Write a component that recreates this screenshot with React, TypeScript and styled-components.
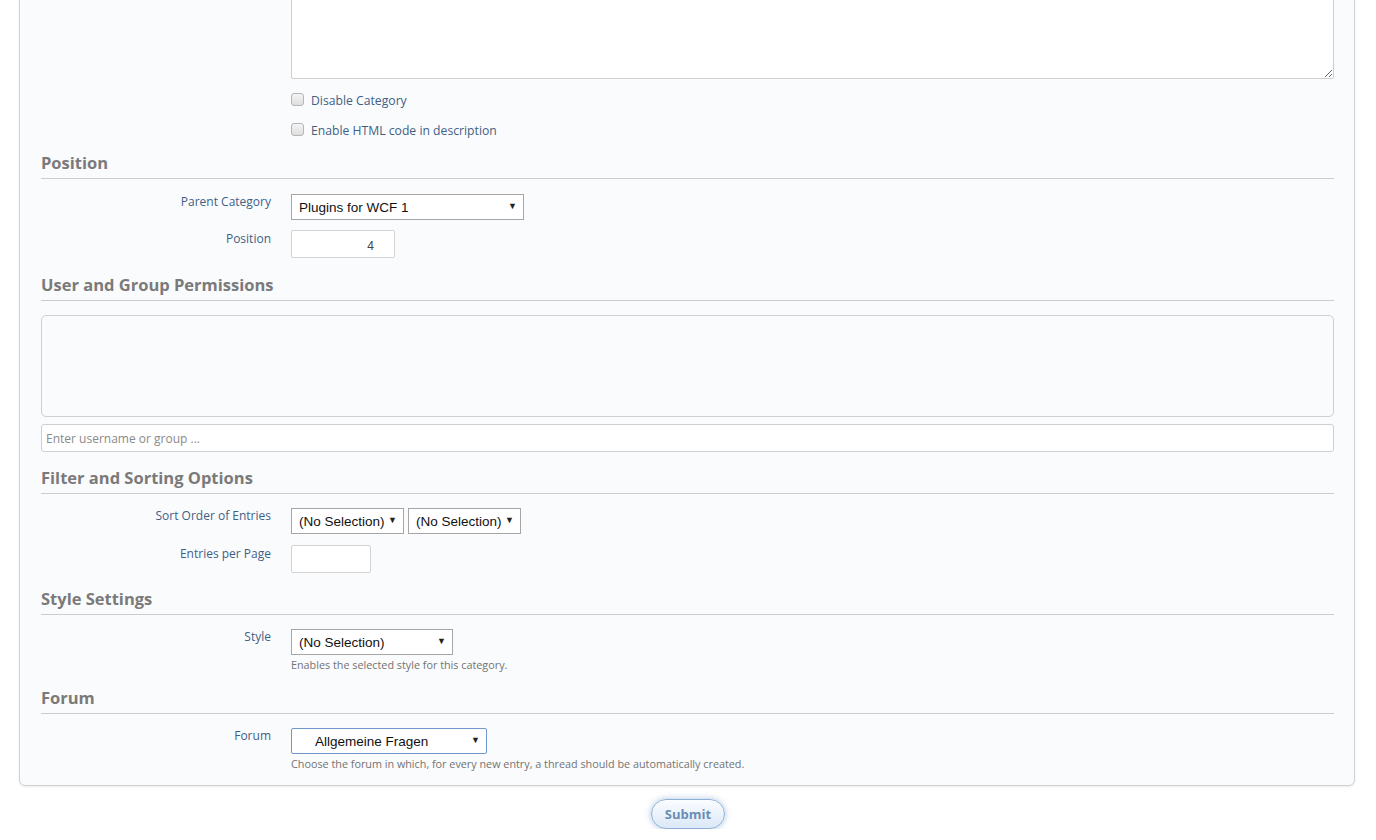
import styled, { createGlobalStyle } from 'styled-components';

const GlobalStyle = createGlobalStyle`
  html, body {
    margin: 0;
    padding: 0;
    background: #ffffff;
    overflow: hidden;
  }
  * {
    box-sizing: border-box;
  }
`;

const Page = styled.div`
  padding: 0 21px 0 19px;
  font-family: "Open Sans", "Noto Sans", sans-serif;
`;

const Container = styled.div`
  margin-top: -32px;
  background: #fafbfc;
  border: 1px solid #cfd2d5;
  border-radius: 0 0 6px 6px;
  box-shadow: 0 1px 2px rgba(0, 0, 0, 0.08);
  padding: 20px 20px 14px 21px;
`;

const FieldRow = styled.div<{ $gap?: number }>`
  display: grid;
  grid-template-columns: 230px 1fr;
  column-gap: 20px;
  margin-top: ${(p) => p.$gap ?? 0}px;
`;

const Label = styled.label<{ $offset?: number }>`
  text-align: right;
  font-size: 12px;
  line-height: 16px;
  color: #3f5f86;
  padding-top: ${(p) => p.$offset ?? 0}px;
`;

const FieldCol = styled.div`
  display: flex;
  flex-direction: column;
  align-items: flex-start;
`;

const TextArea = styled.textarea`
  width: 100%;
  height: 90px;
  display: block;
  border: 1px solid #cfcfcf;
  border-radius: 2px;
  background: #fff;
  resize: vertical;
`;

const CheckRow = styled.label<{ $gap: number }>`
  display: flex;
  align-items: center;
  gap: 7px;
  height: 20px;
  margin-top: ${(p) => p.$gap}px;
  font-size: 12.2px;
  color: #3f5f86;
`;

const Check = styled.input`
  appearance: none;
  margin: 0 0 2px 0;
  width: 13px;
  height: 13px;
  border: 1px solid #b5b5b5;
  border-radius: 3px;
  background: linear-gradient(#f4f4f4, #dedede);
`;

const SectionTitle = styled.h2<{ $gap: number }>`
  margin: ${(p) => p.$gap}px 0 0;
  font-size: 16.5px;
  line-height: 22px;
  font-weight: 700;
  color: #7a7a7a;
  padding-bottom: 4px;
  border-bottom: 1px solid #cccccc;
`;

const SelectBox = styled.div<{ $width: number; $focus?: boolean; $indent?: number }>`
  position: relative;
  width: ${(p) => p.$width}px;
  height: 26px;
  border: 1px solid ${(p) => (p.$focus ? '#6f97cc' : '#a6a6a6')};
  border-radius: ${(p) => (p.$focus ? '2px' : '0')};
  background: #fff;
  font-family: "Liberation Sans", Arial, sans-serif;
  font-size: 13.5px;
  color: #111;
  display: flex;
  align-items: center;
  padding-left: ${(p) => p.$indent ?? 7}px;

  &::after {
    content: '▼';
    position: absolute;
    right: 6px;
    top: 6px;
    font-size: 9px;
    color: #222;
  }
`;

const SelectPair = styled.div`
  display: flex;
  gap: 4px;
`;

const TextInput = styled.input<{ $width: number; $align?: string }>`
  width: ${(p) => p.$width}px;
  height: 28px;
  border: 1px solid #d3d3d3;
  border-radius: 2px;
  background: #fff;
  font-family: "Liberation Sans", Arial, sans-serif;
  font-size: 12px;
  color: #444;
  text-align: ${(p) => p.$align ?? 'left'};
  padding: 4px 20px 0 6px;
`;

const PermBox = styled.div`
  margin-top: 14px;
  height: 102px;
  border: 1px solid #cfcfcf;
  border-radius: 5px;
  background: #fafbfc;
`;

const SearchInput = styled.input`
  display: block;
  margin-top: 7px;
  width: 100%;
  height: 28px;
  border: 1px solid #cfcfcf;
  border-radius: 3px;
  background: #fff;
  padding: 0 4px;
  font-family: "Open Sans", sans-serif;
  font-size: 12px;
  color: #333;

  &::placeholder {
    color: #8a8a8a;
  }
`;

const Description = styled.small`
  display: block;
  margin-top: 3px;
  font-size: 10.8px;
  line-height: 14px;
  color: #737373;
`;

const ButtonBar = styled.div`
  display: flex;
  justify-content: center;
  margin-top: 13px;
`;

const SubmitButton = styled.button`
  height: 30px;
  padding: 0 13px;
  margin-left: 2px;
  border: 1px solid #8fb0d6;
  border-radius: 15px;
  background: linear-gradient(#fbfdff, #dbe8f7);
  box-shadow: 0 0 6px rgba(110, 150, 200, 0.55);
  font-family: "Open Sans", sans-serif;
  font-weight: 700;
  font-size: 13px;
  color: #6c8db3;
`;

const App = () => {
  return (
    <>
      <GlobalStyle />
      <Page>
        <Container>
          <FieldRow>
            <span />
            <FieldCol>
              <TextArea />
              <CheckRow $gap={11}>
                <Check type="checkbox" />
                Disable Category
              </CheckRow>
              <CheckRow $gap={10}>
                <Check type="checkbox" />
                Enable HTML code in description
              </CheckRow>
            </FieldCol>
          </FieldRow>

          <SectionTitle $gap={12}>Position</SectionTitle>
          <FieldRow $gap={15}>
            <Label $offset={0}>Parent Category</Label>
            <FieldCol>
              <SelectBox $width={233}>Plugins for WCF 1</SelectBox>
            </FieldCol>
          </FieldRow>
          <FieldRow $gap={10}>
            <Label $offset={1}>Position</Label>
            <FieldCol>
              <TextInput $width={104} $align="right" defaultValue="4" />
            </FieldCol>
          </FieldRow>

          <SectionTitle $gap={16}>User and Group Permissions</SectionTitle>
          <PermBox />
          <SearchInput placeholder="Enter username or group ..." />

          <SectionTitle $gap={15}>Filter and Sorting Options</SectionTitle>
          <FieldRow $gap={14}>
            <Label $offset={0}>Sort Order of Entries</Label>
            <FieldCol>
              <SelectPair>
                <SelectBox $width={113}>(No Selection)</SelectBox>
                <SelectBox $width={113}>(No Selection)</SelectBox>
              </SelectPair>
            </FieldCol>
          </FieldRow>
          <FieldRow $gap={11}>
            <Label $offset={1}>Entries per Page</Label>
            <FieldCol>
              <TextInput $width={80} />
            </FieldCol>
          </FieldRow>

          <SectionTitle $gap={15}>Style Settings</SectionTitle>
          <FieldRow $gap={14}>
            <Label $offset={0}>Style</Label>
            <FieldCol>
              <SelectBox $width={162}>(No Selection)</SelectBox>
              <Description>Enables the selected style for this category.</Description>
            </FieldCol>
          </FieldRow>

          <SectionTitle $gap={15}>Forum</SectionTitle>
          <FieldRow $gap={14}>
            <Label $offset={0}>Forum</Label>
            <FieldCol>
              <SelectBox $width={196} $focus $indent={23}>
                Allgemeine Fragen
              </SelectBox>
              <Description>
                Choose the forum in which, for every new entry, a thread should be automatically created.
              </Description>
            </FieldCol>
          </FieldRow>
        </Container>
        <ButtonBar>
          <SubmitButton type="submit">Submit</SubmitButton>
        </ButtonBar>
      </Page>
    </>
  );
};

export default App;
